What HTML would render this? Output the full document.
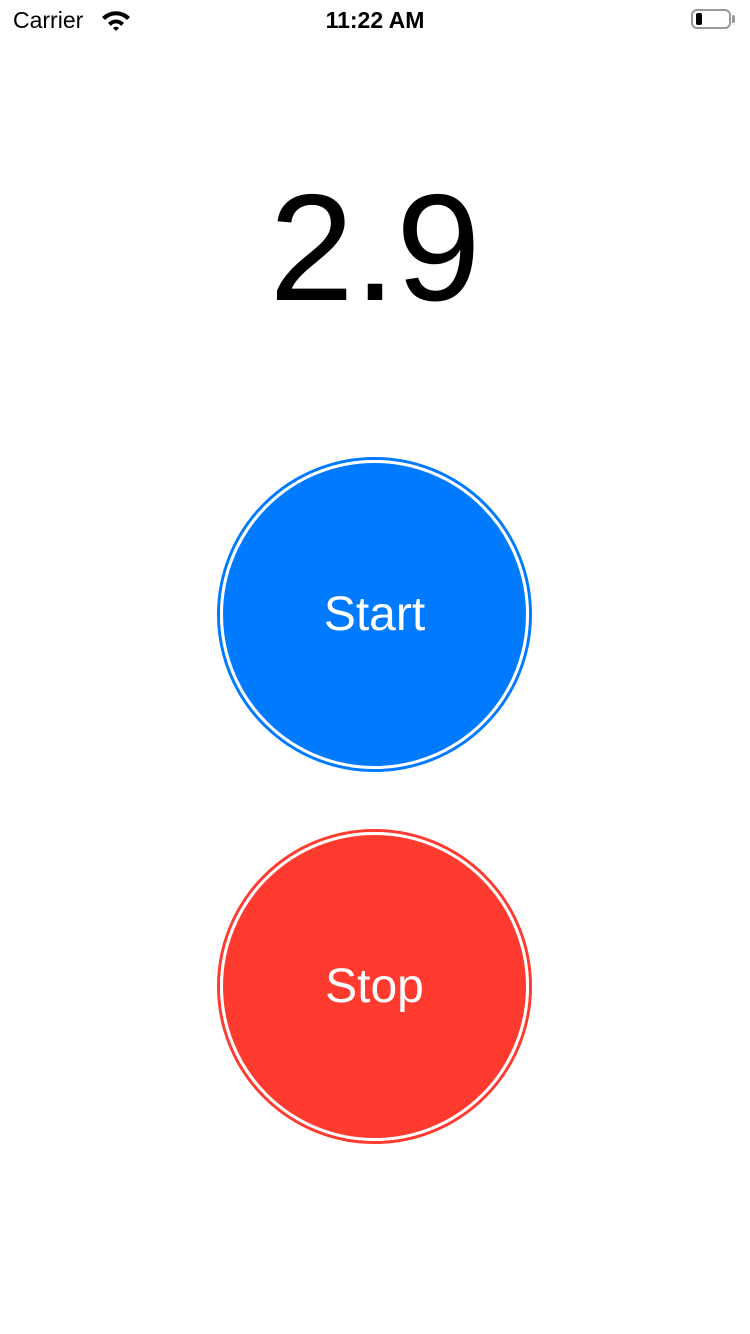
<!DOCTYPE html>
<html><head><meta charset="utf-8"><style>
html,body{margin:0;padding:0;background:#fff;width:750px;height:1334px;overflow:hidden;font-family:"Liberation Sans",sans-serif;position:relative}
.sb{position:absolute;top:0;left:0;width:750px;height:40px;font-size:23px;color:#000}
.num{position:absolute;left:0;width:750px;text-align:center;top:158px;font-size:152px;line-height:180px;color:#000}
.btn{position:absolute;left:217px;width:315px;height:315px;border-radius:50%;box-sizing:border-box;border:3px solid;display:flex;align-items:center;justify-content:center}
.inner{width:309px;height:309px;border-radius:50%;box-sizing:border-box;border:3px solid #fff;display:flex;align-items:center;justify-content:center;color:#fff;font-size:48px}
</style></head><body>
<div class="sb">
<span style="position:absolute;left:13px;top:7px">Carrier</span>
<svg style="position:absolute;left:100px;top:9px" width="32" height="22" viewBox="0 0 32 22"><path d="M2 8 A20 20 0 0 1 30 8 L27 11 A15 15 0 0 0 5 11Z M8 14 A11 11 0 0 1 24 14 L21 17 A6 6 0 0 0 11 17Z M13 19 L16 22 L19 19 A4 4 0 0 0 13 19Z" fill="#000"/></svg>
<span style="position:absolute;left:0;width:750px;text-align:center;top:7px;font-weight:bold">11:22 AM</span>
<div style="position:absolute;left:691px;top:9px;width:40px;height:20px;border:2px solid #999;border-radius:6px;box-sizing:border-box"></div>
<div style="position:absolute;left:696px;top:13px;width:6px;height:12px;background:#000;border-radius:2px"></div>
<div style="position:absolute;left:732px;top:15px;width:3px;height:8px;background:#999;border-radius:0 2px 2px 0"></div>
</div>
<div class="num">2.9</div>
<div class="btn" style="top:457px;border-color:#007aff;background:#fff"><div class="inner" style="background:#007aff">Start</div></div>
<div class="btn" style="top:829px;border-color:#ff3b30;background:#fff"><div class="inner" style="background:#ff3b30">Stop</div></div>
</body></html>
